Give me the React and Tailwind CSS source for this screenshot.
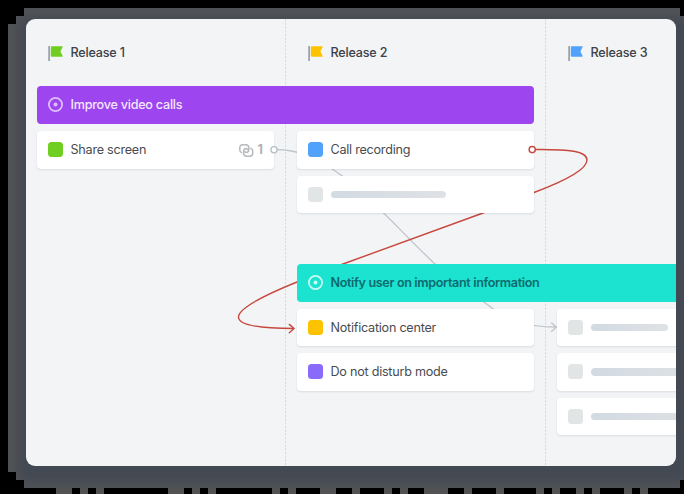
import React from "react";

const notches = [
  [56, 16], [80, 8], [96, 8], [168, 16], [192, 8], [208, 8], [272, 8], [288, 8], [320, 16], [352, 8],
  [384, 8], [400, 8], [424, 24], [464, 8], [496, 8], [536, 8], [552, 8], [576, 8], [592, 8], [624, 8], [640, 8],
];

function Backdrop() {
  return (
    <svg className="absolute inset-0" width="684" height="494" viewBox="0 0 684 494">
      <defs>
        <clipPath id="edge">
          <path d="M24 8H680V16H684V480H680V488H24V480H16V472H8V24H16V16H24Z" />
        </clipPath>
        <filter id="soft" x="-10%" y="-10%" width="120%" height="120%">
          <feGaussianBlur stdDeviation="5" />
        </filter>
      </defs>
      <g clipPath="url(#edge)">
        <rect width="684" height="494" fill="#505256" />
        <rect x="18" y="18" width="672" height="464" rx="10" fill="#424a52" filter="url(#soft)" />
      </g>
      {notches.map(([x, w]) => (
        <rect key={x} x={x} y="488" width={w} height="6" fill="#525254" />
      ))}
    </svg>
  );
}

function Flag({ color }) {
  return (
    <svg className="-mt-px shrink-0" width="15" height="15" viewBox="0 0 15 15">
      <rect x="0.3" y="0" width="1.6" height="15" fill="#929aa3" />
      <path d="M4 0.2H14.2Q15 0.2 14.6 1L12.4 5.4L14.6 9.8Q15 10.8 14.2 10.8H4Q2.8 10.8 2.8 9.6V1.4Q2.8 0.2 4 0.2Z" fill={color} />
    </svg>
  );
}

function Release({ name, color }) {
  return (
    <div className="flex items-center gap-[7.5px] pl-[11px]">
      <Flag color={color} />
      <span className="text-[12.6px] font-medium tracking-[-0.2px] text-[#3c4248]">{name}</span>
    </div>
  );
}

function Target({ color }) {
  return (
    <svg className="shrink-0" width="15" height="15" viewBox="0 0 15 15">
      <circle cx="7.5" cy="7.5" r="6.6" fill="none" stroke={color} strokeWidth="1.8" />
      <circle cx="7.5" cy="7.5" r="2" fill={color} />
    </svg>
  );
}

function Card({ label, swatch, bar, children }) {
  return (
    <div className="flex h-[37.5px] w-[237px] items-center rounded-[4px] bg-white pl-[11px] shadow-[0_1px_2px_rgba(40,55,70,0.12)]">
      <span className={`h-[15px] w-[15px] shrink-0 rounded-[3.5px] ${swatch}`} />
      {label && <span className="ml-[7.5px] pt-[2px] text-[12.6px] tracking-[-0.24px] text-[#494c50]">{label}</span>}
      {bar && <span className={`ml-[7.5px] h-[7.5px] shrink-0 rounded-full bg-linear-to-r from-[#d2dae2] to-[#dfe2e5] ${bar}`} />}
      {children}
    </div>
  );
}

function Links() {
  return (
    <svg width="15" height="13" viewBox="0 0 15 13" fill="none" stroke="#b5b9bb" strokeWidth="1.5" strokeLinecap="round">
      <path d="M2.6 8.6C1.4 8.1.8 7.2.8 6V3.8C.8 1.9 1.9.8 3.8.8H6.8C8.700.8 9.800 1.900 9.800 3.800V5.600C9.800 7.500 8.700 8.600 7.200 8.600C6.500 8.600 6.100 8.200 6.100 7.600" />
      <path d="M12.400 4.400C13.600 4.900 14.200 5.800 14.200 7V9.200C14.200 11.100 13.100 12.200 11.200 12.200H8.200C6.300 12.200 5.200 11.100 5.200 9.200V7.400C5.200 5.500 6.300 4.400 7.800 4.400C8.500 4.400 8.900 4.800 8.900 5.400" transform="translate(-0.5 0)" />
    </svg>
  );
}

function Lines() {
  return (
    <svg className="absolute inset-0" width="650" height="447" viewBox="26 19 650 447" fill="none">
      <path d="M285.5 19V466M545.5 19V466" stroke="#d5d9dc" strokeWidth="1" strokeDasharray="2.2 1.5" />
      <path d="M274 149.5C300 149.5 315 157 341 175C370 196 405 236 435 264C455 283 475 295 492 308C508 320 526 327 556 327" stroke="#bfc4c9" strokeWidth="1.3" />
      <path d="M532 149.5C570 149 587 151 587 160C587 170 562 182 534 192.5L483 213L343 264L297 282C260 297 238.5 309 238.5 317C238.5 326 264 328.5 294 328.5" stroke="#c8473d" strokeWidth="1.4" />
    </svg>
  );
}

function Connectors() {
  return (
    <svg className="pointer-events-none absolute inset-0" width="650" height="447" viewBox="26 19 650 447" fill="none">
      <circle cx="274" cy="149.7" r="3.1" fill="#fff" stroke="#b8bec2" strokeWidth="1.3" />
      <circle cx="532.2" cy="149.6" r="3.1" fill="#fff" stroke="#c8473d" strokeWidth="1.4" />
      <path d="M289.3 324.4L294 328.5L289.3 332.7" stroke="#c8473d" strokeWidth="1.4" strokeLinecap="round" />
      <path d="M551.6 322.9L556.5 327.1L551.6 331.3" stroke="#bfc4c9" strokeWidth="1.3" strokeLinecap="round" />
    </svg>
  );
}

export default function App() {
  return (
    <div className="relative h-[494px] w-[684px] overflow-hidden bg-black pt-[19px] pl-[26px] font-['Inter','Roboto',sans-serif]">
      <Backdrop />
      <main className="relative h-[447px] w-[650px] overflow-hidden rounded-[9px] bg-[#f2f4f6]">
        <Lines />
        <div className="relative pl-[11px]">
          <header className="grid h-[67px] grid-cols-[237px_237px_237px] gap-[23px] pt-[2px]">
            <Release name="Release 1" color="#70ce22" />
            <Release name="Release 2" color="#fdc300" />
            <Release name="Release 3" color="#50a2fb" />
          </header>
          <section className="h-[178px]">
            <div className="flex h-[37.5px] w-[497px] items-center gap-[7.5px] rounded-[4px] bg-[#9d46ef] pl-[11px]">
              <Target color="#dfbdfd" />
              <span className="pt-[2px] text-[12.6px] font-medium tracking-[-0.24px] text-[#f4e6ff]">Improve video calls</span>
            </div>
            <div className="mt-[7.5px] grid grid-cols-[237px_237px] gap-[23px]">
              <Card label="Share screen" swatch="bg-[#70ce22]">
                <span className="mr-[11px] ml-auto flex items-center gap-[4px] pt-px text-[12.5px] font-bold text-[#adb1b3]">
                  <Links />
                  <span>1</span>
                </span>
              </Card>
              <div className="flex flex-col gap-[7px]">
                <Card label="Call recording" swatch="bg-[#50a2fb]" />
                <Card swatch="bg-[#e2e5e6]" bar="w-[115px]" />
              </div>
            </div>
          </section>
          <section className="ml-[260px]">
            <div className="flex h-[37.5px] w-[497px] items-center gap-[7.5px] rounded-[4px] bg-[#1be3cf] pl-[11px]">
              <Target color="#c9fbf5" />
              <span className="pt-[2px] text-[12.6px] font-semibold tracking-[-0.36px] text-[#0d6b70]">Notify user on important information</span>
            </div>
            <div className="mt-[7px] grid grid-cols-[237px_237px] gap-[23px]">
              <div className="flex flex-col gap-[7px]">
                <Card label="Notification center" swatch="bg-[#fdc300]" />
                <Card label="Do not disturb mode" swatch="bg-[#8a6afb]" />
              </div>
              <div className="flex flex-col gap-[7px]">
                <Card swatch="bg-[#e2e5e6]" bar="w-[77px]" />
                <Card swatch="bg-[#e2e5e6]" bar="w-[115px]" />
                <Card swatch="bg-[#e2e5e6]" bar="w-[115px]" />
              </div>
            </div>
          </section>
        </div>
        <Connectors />
      </main>
    </div>
  );
}
